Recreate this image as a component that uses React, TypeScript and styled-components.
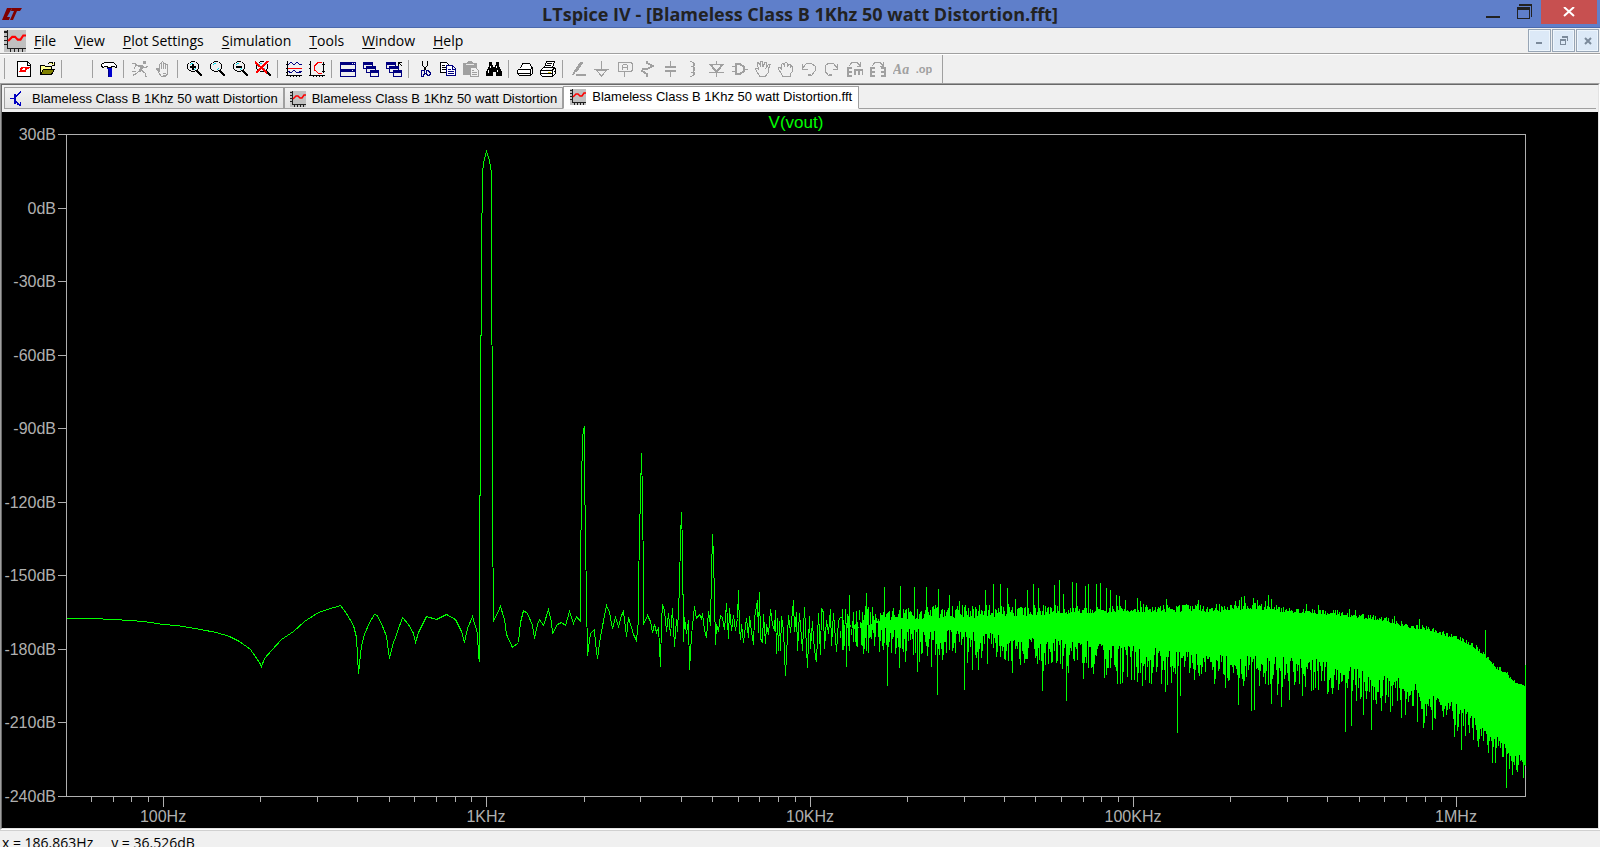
import styled, { createGlobalStyle } from "styled-components";
import { FC, ReactNode } from "react";

const INK = "#000";
const NAVY = "#000080";
const RED = "#f00";
const GRAY = "#a0a0a0";

const PLOT = { left: 66, right: 1525, top: 134, bottom: 796 };
const DECADE = 323;
const X_100HZ = 163;

const Y_LABELS = [30, 0, -30, -60, -90, -120, -150, -180, -210, -240];
const X_LABELS = ["100Hz", "1KHz", "10KHz", "100KHz", "1MHz"];

// Low frequency part of the spectrum, where the single bins are visible
const TRACE =
  "66,618 92,618 113,619 129,620 143,621 163,624 176,625 200,629 216,632 229,636 239,641 250,649 259,662 261,666 264,658 271,650 281,639 293,631 304,621 318,612 327,609 340,605 346,613 353,625 356,637 358,673 361,645 364,634 369,622 374,614 377,615 383,628 386,636 389,658 392,645 396,634 402,617 408,624 413,633 415,642 418,632 426,616 436,619 446,614 455,619 461,631 464,642 467,628 472,616 477,633 478,655 479,661 479,580 480,418 481,256 482,172 483,164 484,158 486,151 488,157 489,160 490,167 491,172 491,287 492,400 492,510 493,621 500,606 504,619 506,634 512,647 518,642 520,622 523,610 527,613 532,625 534,638 537,624 539,619 543,625 548,609 551,621 552,633 557,624 561,622 565,625 569,611 573,623 576,616 580,621 580,576 581,486 582,437 583,430 584,426 584,465 585,541 587,655 590,633 594,629 595,643 597,658 600,636 606,605 609,612 612,628 615,617 618,626 621,615 623,611 626,636 628,617 633,634 636,640 638,620 638,588 639,534 641,453 642,496 643,582 643,624 647,615 650,621 652,632 654,624 656,632 658,627 660,666 661,622 662,604 664,610 666,631 668,613 670,635 672,608 674,646 676,619 677,631 679,587 680,537 681,512 682,545 683,641 684,617 686,633 688,620 689,669 691,635 694,606 696,618 699,614 701,618 702,613 704,630 706,637 708,611 710,625 711,574 712,534 713,556 714,598 715,644 716,624 718,631 720,615 722,617 724,629 726,603 728,638 729,608 731,630 733,615 735,630 737,618 738,590 739,628 740,639 741,624 743,642 746,618 748,637 749,616 751,631 753,644 754,617 757,600 758,632 759,592 760,638 762,642 763,614 765,643 766,624 768,634 770,609 772,624 774,630 775,610 776,653 777,618 778,650 779,621 780,650 781,616 783,630 785,675 786,655 788,615 790,632 793,600 794,631 796,612 797,650 799,613 802,650 804,607 807,667 809,616 810,648 812,621 813,639 815,657 816,661 818,613 820,654 821,608 823,612 824,648 826,620 828,633 830,609 831,645 833,613 836,651 838,620 840,617";

// [x, y, depth of the random part]
const TOP: number[][] = [
  [836, 632, 24], [860, 627, 22], [880, 620, 15], [900, 619, 14], [960, 617, 14], [1020, 616, 13], [1060, 613, 9], [1100, 612, 7],
  [1150, 611, 8], [1230, 611, 8], [1260, 609, 8], [1290, 612, 5], [1330, 614, 6], [1350, 617, 5],
  [1380, 620, 6], [1410, 628, 5], [1430, 630, 5], [1450, 637, 4], [1470, 645, 6], [1480, 652, 5], [1485, 657, 4],
  [1495, 667, 4], [1505, 673, 4], [1515, 682, 2], [1525, 686, 1],
];
const BOTTOM: number[][] = [
  [836, 614, 38], [860, 619, 32], [900, 626, 30], [950, 629, 27], [1000, 633, 27], [1050, 637, 28], [1100, 641, 28],
  [1130, 644, 28], [1160, 647, 26], [1200, 653, 20], [1230, 654, 32], [1260, 655, 34], [1300, 656, 34],
  [1340, 662, 34], [1375, 674, 34], [1400, 674, 34], [1420, 684, 30], [1440, 695, 24], [1460, 704, 28],
  [1480, 723, 22], [1490, 729, 26], [1505, 743, 24], [1525, 752, 26],
];
const PEAKS: number[][] = [
  [849, 594], [866, 592], [884, 586], [900, 585], [914, 586], [926, 586], [938, 588], [949, 594], [959, 600], [985, 589],
  [993, 583], [1000, 583], [1007, 587], [1015, 598], [1027, 589], [1033, 583], [1038, 587], [1054, 584],
  [1059, 579], [1063, 593], [1072, 581], [1076, 582], [1085, 585], [1088, 583], [1096, 583], [1100, 582],
  [1106, 587], [1110, 589], [1116, 594], [1119, 595], [1125, 599], [1137, 597], [1140, 600], [1166, 598],
  [1198, 599], [1235, 600], [1239, 599], [1241, 596], [1244, 595], [1253, 597], [1257, 599], [1265, 600],
  [1268, 594], [1271, 598], [1306, 603], [1318, 604], [1349, 608], [1355, 609], [1394, 615], [1419, 618],
  [1485, 629], [1525, 664],
];
const NOTCHES: number[][] = [
  [846, 666], [863, 653], [887, 685], [899, 667], [905, 661], [917, 671], [919, 661], [931, 666], [937, 694], [942, 659],
  [964, 689], [967, 662], [972, 669], [978, 669], [987, 663], [1012, 672], [1020, 664], [1037, 663],
  [1042, 690], [1043, 670], [1051, 662], [1056, 662], [1062, 668], [1066, 700], [1068, 672], [1083, 678],
  [1093, 673], [1104, 677], [1106, 674], [1117, 683], [1120, 683], [1122, 682], [1127, 676], [1131, 679],
  [1134, 679], [1137, 681], [1142, 685], [1145, 679], [1149, 682], [1151, 683], [1161, 683], [1165, 691],
  [1167, 684], [1171, 682], [1177, 732], [1180, 695], [1194, 679], [1199, 675], [1214, 683], [1225, 687],
  [1229, 679], [1238, 704], [1244, 680], [1251, 710], [1254, 709], [1271, 703], [1277, 694], [1281, 706],
  [1289, 699], [1302, 695], [1313, 689], [1328, 691], [1345, 731], [1351, 725], [1356, 700], [1363, 714],
  [1371, 729], [1381, 710], [1390, 711], [1401, 717], [1405, 714], [1417, 721], [1423, 727], [1424, 722],
  [1432, 729], [1443, 716], [1454, 736], [1461, 749], [1478, 746], [1492, 762], [1495, 762], [1506, 787],
  [1509, 768], [1512, 774], [1516, 769], [1523, 777], [1525, 765],
];

const envelope = (points: number[][], x: number) => {
  const i = Math.max(1, points.findIndex((p) => p[0] >= x));
  const [a, b] = [points[i - 1], points[i]];
  const t = (x - a[0]) / (b[0] - a[0]);
  return [a[1] + (b[1] - a[1]) * t, a[2] + (b[2] - a[2]) * t];
};

const buildNoise = () => {
  let seed = 7919;
  const random = () => {
    seed = (seed * 16807) % 2147483647;
    return seed / 2147483647;
  };
  const peaks = new Map(PEAKS.map(([x, y]) => [x, y]));
  const notches = new Map(NOTCHES.map(([x, y]) => [x, y]));
  let path = "";
  for (let x = 840; x <= PLOT.right; x++) {
    const [topBase, topDepth] = envelope(TOP, x);
    const [bottomBase, bottomDepth] = envelope(BOTTOM, x);
    const top = peaks.get(x) ?? Math.round(topBase - topDepth * random() ** 1.2);
    const bottom = notches.get(x) ?? Math.round(bottomBase + bottomDepth * random() ** 1.2);
    path += `M${x} ${top}V${bottom}`;
  }
  return path;
};

const NOISE = buildNoise();

const buildTicks = () => {
  let path = "";
  Y_LABELS.forEach((_, i) => {
    path += `M57 ${Math.round(PLOT.top + (i * 662) / 9)}H66`;
  });
  for (let decade = -1; decade < 5; decade++) {
    for (let n = 1; n < 10; n++) {
      const x = Math.round(X_100HZ + DECADE * (decade + Math.log10(n)) + decade * 0.3);
      if (x < PLOT.left || x > PLOT.right) continue;
      path += `M${x} ${PLOT.bottom}v${n === 1 ? 10 : 5}`;
    }
  }
  return path;
};

const TICKS = buildTicks();

const Line: FC<{ d: string; color?: string; fill?: string; width?: number }> = ({
  d,
  color = INK,
  fill = "none",
  width = 1,
}) => <path d={d} stroke={color} fill={fill} strokeWidth={width} />;

const LtLogo: FC = () => (
  <svg width="20" height="14" viewBox="0 0 20 14" aria-hidden="true">
    <path d="M5 1h5L5 10h3l-1 3H0zM10 1h10l-2 3h-3l-4 9H8l4-9H9z" fill="#800000" />
  </svg>
);

const WaveIcon: FC<{ size: number }> = ({ size }) => (
  <svg width={size} height={size} viewBox="0 0 16 16" aria-hidden="true">
    <rect width="16" height="16" fill="#c0c0c0" />
    <path
      d="M2.5 0v14M0 1.5h2M0 4.5h2M0 7.5h2M0 10.5h2M2 13.5h14M4.5 14v2M7.5 14v2M10.5 14v2M13.5 14v2"
      stroke="#202020"
      fill="none"
      shapeRendering="crispEdges"
    />
    <path d="M3 8l2-2 1-1h2l2 2h2l2-3h2" stroke={RED} strokeWidth="1.5" fill="none" />
  </svg>
);

const SchematicIcon: FC = () => (
  <svg width="16" height="16" viewBox="0 0 16 16" shapeRendering="crispEdges" aria-hidden="true">
    <path d="M4 3h2v10H4z" fill="#0000c0" />
    <Line color="#0000c0" d="M0 7.5h5M6 5.500l5-5M6 10.500l4 4M7 13.500h4M10.500 11v4" />
  </svg>
);

const Lens: FC<{ children?: ReactNode }> = ({ children }) => (
  <g transform="translate(1 0)">
    <Line d="M4 .5h4M2.500 1.500h1M8.500 1.500h1M1.500 2v1M10.500 2v1M.5 3v5M11.500 3v5M1.500 8v1M10.500 8v1M2 9.500h2M8 9.500h2M4 10.500h4" />
    <Line color="#00d8e8" d="M3 3.500h1M4 2.500h2M8.500 7v1M7 8.500h1" />
    <Line width={2} d="M10 10l5 5" />
    {children}
  </g>
);

const Windows: FC = () => (
  <>
    <path d="M0 1h10v7H0zM3 5h10v7H3zM7 9h9v7H7z" fill={NAVY} />
    <path d="M1 4h8v1H1zM1 5h2v2H1zM4 8h8v1H4zM4 9h3v2H4zM8 12h7v3H8z" fill="#f0f0f0" />
  </>
);

type Tool = { label: string; icon?: ReactNode; disabled?: boolean };

const GROUPS: Tool[][] = [
  [
    {
      label: "New Schematic",
      icon: (
        <>
          <Line fill="#fff" d="M1.500 .5h10l3 3v12h-13zM11.500 1v3h3" />
          <path d="M5 6h3l-2 3h2l-1 2H3zM8 6h6l-1 2h-2l-1 3H7l2-3z" fill={RED} />
        </>
      ),
    },
    {
      label: "Open",
      icon: (
        <>
          <Line fill="#ffff90" d="M1.500 13.500v-9h4l1 1h6v3M9 2.500l2-1h2l1 1M15.500 1v3h-3" />
          <Line fill="#808000" d="M1.500 13.500l3-5h11l-3 5z" />
        </>
      ),
    },
  ],
  [{ label: "Save" }],
  [
    {
      label: "Control Panel",
      icon: (
        <>
          <Line fill="#fff" d="M.5 5.500v-2l3-2h9l3 3v2l-3-1h-2v1h-4v-1h-3l-1 1z" />
          <path d="M6 7h5v9H7v-7z" fill="#0000d0" />
          <path d="M7 8h1v8H7z" fill={NAVY} />
        </>
      ),
    },
  ],
  [
    {
      label: "Run",
      disabled: true,
      icon: (
        <>
          <path d="M11 0h3v3h-3zM7 4h4l1 2-3 5H7l1-5H6z" fill={GRAY} />
          <Line color={GRAY} d="M9 9l4 3v3h2M7 10l-3 3H1M11 6l2 1 3-2M7 4.500H4L2 8M0 2.500h3l2 2M0 10.500h4M1 15l3-3" />
        </>
      ),
    },
    {
      label: "Halt",
      disabled: true,
      icon: (
        <Line
          color={GRAY}
          d="M4.500 11l-3-3v-1h1l2 2V3.500l1-1 1 1V8M6.500 3V1.500l1-1 1 1V8M8.500 2h2V8M10.500 3.500h2V13l-2 2.500h-4l-3-4M7.500 12h3M8 14h4"
        />
      ),
    },
  ],
  [
    { label: "Zoom in", icon: <Lens><Line width={2} d="M3 6h6M6 3v6" /></Lens> },
    { label: "Pan", icon: <Lens /> },
    { label: "Zoom out", icon: <Lens><Line width={2} d="M3 6h6" /></Lens> },
    { label: "Zoom full extents", icon: <Lens><Line color={RED} width={2} d="M-1 1l12 11M12 0L0 12" /></Lens> },
  ],
  [
    {
      label: "Autorange",
      icon: (
        <>
          <Line d="M1.500 0v15M0 14.500h16M4.500 15v1M7.500 15v1M10.500 15v1M13.500 15v1M0 3.500h1M0 7.500h1M0 11.500h1" />
          <Line color={NAVY} d="M2 4l3-3 3 3 3-3 3 3 2-1M2 10.500l3 1 3-2 3 2 5-1M10 11.500h5" />
          <Line color={RED} d="M2 8l3-1 3 1 3-1h5" />
        </>
      ),
    },
    {
      label: "Plot limits",
      icon: (
        <>
          <Line d="M1.500 0v15M0 14.500h16M4.500 15v1M7.500 15v1M10.500 15v1M13.500 15v1M0 3.500h1M0 7.500h1M14.500 1v11M12.500 3.500h4M12.500 10.500h4M5.500 5v5" />
          <Line color={RED} d="M13 1.500H9l-4 4v3l4 3.500h4" />
        </>
      ),
    },
  ],
  [
    {
      label: "Tile windows",
      icon: (
        <>
          <path d="M0 1h16v15H0z" fill={NAVY} />
          <path d="M1 4h14v4H1zM1 11h14v4H1z" fill="#f0f0f0" />
          <path d="M12 2h1v1h-1zM14 2h1v1h-1zM12 9h1v1h-1z" fill="#f0f0f0" />
        </>
      ),
    },
    { label: "Cascade windows", icon: <Windows /> },
    { label: "Close all windows", icon: <><Windows /><Line d="M12 1.500h4M12.500 1v4M13 2l3 3" /></> },
  ],
  [
    {
      label: "Cut",
      icon: (
        <>
          <Line d="M5.500 0v4l4 6M10.500 0v4l-4 6" />
          <Line color={NAVY} d="M5 9.500h2v4l-1 2h-1l-1-1v-3zM10 9.500h1l2 2v2l-1 1h-1l-2-2z" />
        </>
      ),
    },
    {
      label: "Copy",
      icon: (
        <>
          <Line fill="#fff" d="M.5 1.500h6l3 3v7h-9zM2 4.500h3M2 6.500h5M2 8.500h5" />
          <Line color={NAVY} fill="#fff" d="M6.500 4.500h6l3 3v7h-9zM12.500 5v3h3M8 8.500h3M8 10.500h6M8 12.500h6" />
        </>
      ),
    },
    {
      label: "Paste",
      disabled: true,
      icon: (
        <>
          <path d="M0 2h4l1-2h4l1 2h4v12H0z" fill={GRAY} />
          <Line color="#e8e8e8" d="M3 3.500h8" />
          <Line color={GRAY} fill="#f0f0f0" d="M7.500 6.500h5l3 3v6h-8zM9 9.500h2M9 11.500h5M9 13.500h5" />
        </>
      ),
    },
    {
      label: "Find",
      icon: (
        <>
          <path d="M3 1h3v3h1v2h2V4h1V1h3v4l3 6v4h-6v-4H7v4H0v-4l3-6z" fill={INK} />
          <Line color="#fff" d="M4.500 5v2M2.500 9v3M10.500 5v2M11.500 9v2" />
        </>
      ),
    },
  ],
  [
    {
      label: "Print Setup",
      icon: (
        <Line fill="#fff" d="M3.500 7.500l2-5h7l2 3v2M1.500 8.500h12l2-2v6l-2 2h-11l-2-2v-3zM1 12.500h12M2 14.500h12M13.500 9v5" />
      ),
    },
    {
      label: "Print",
      icon: (
        <>
          <Line fill="#fff" d="M4.500 6.500l2-6h8l-2 6M7 2.500h5M6 4.500h5M.5 9.500l3-3h11l1 1v5l-3 3h-10l-2-2zM1 9.500h11l3-3M1 12.500h12M12.500 10v5M14 10.500h2" />
          <Line color="#d8c800" d="M8 11.500h3" />
        </>
      ),
    },
  ],
  [
    {
      label: "Draw Wire",
      disabled: true,
      icon: (
        <>
          <Line color={GRAY} width={3} d="M11 1L4 11" />
          <Line color={GRAY} width={2} d="M2 14l2-4M5 14h10" />
        </>
      ),
    },
    { label: "Ground", disabled: true, icon: <Line color={GRAY} d="M7.500 0v8M0 8.500h15M2 9l5.500 6L13 9M3 9.500h9" /> },
    {
      label: "Label Net",
      disabled: true,
      icon: <Line color={GRAY} d="M2 1.500h12l1 1v7l-1 1H2l-1-1v-7zM7.500 11v5M5.500 9V5l1-1.500h3l1 1.500v4M6 6.500h4" />,
    },
    { label: "Resistor", disabled: true, icon: <Line color={GRAY} width={2} d="M7 0v2l6 3-6 3H3l-1 2 5 3v3" /> },
    { label: "Capacitor", disabled: true, icon: <><Line color={GRAY} d="M7.500 0v6M7.500 10v6" /><Line color={GRAY} width={2} d="M2 6h11M2 10h11" /></> },
    {
      label: "Inductor",
      disabled: true,
      icon: (
        <path
          d="M4 0h2v1h2v1h1v3H8v1h1v4H8v1h1v3H8v1H6v1H4v-1h2v-1h1v-2H5v-1h2V6H5V5h2V2H6V1H4z"
          fill={GRAY}
        />
      ),
    },
    {
      label: "Diode",
      disabled: true,
      icon: <><Line color={GRAY} d="M7.500 0v3M0 3.500h15M7.500 12v4M0 11.500h15" /><Line color={GRAY} width={2} d="M2 4l5.500 7L13 4" /></>,
    },
    {
      label: "Component",
      disabled: true,
      icon: <><Line color={GRAY} d="M0 5.500h4M0 10.500h4M13 8h3" /><Line color={GRAY} width={2} d="M4 3h4l4 3v4l-4 3H4z" /></>,
    },
    {
      label: "Move",
      disabled: true,
      icon: (
        <Line color={GRAY} d="M5 15.500L1.500 10 .5 7.500h2l1 1L2.500 3V1.500h1L6 6 5.500 1V.5h2L8 6l2-5h1.500L11 7l3-4h1.500L13 9v3l-3 3.500z" />
      ),
    },
    {
      label: "Drag",
      disabled: true,
      icon: (
        <Line color={GRAY} d="M5 15.500L2.500 11 .5 8.500v-2h2l1 2V4l1-1.500h1L6.500 6V2.500l1-1h1l1 1V6l1-3h1l1 1v2l1-1 1 1v4l-2 3v2.500z" />
      ),
    },
    { label: "Undo", disabled: true, icon: <Line color={GRAY} d="M1.500 3v5h5M2 7l3-4 3-1h2l4 3v5l-3 4H7M7 13.500h3M2 5.500h2" /> },
    { label: "Redo", disabled: true, icon: <Line color={GRAY} d="M13.500 3v5h-5M13 7l-3-4-3-1H5L1 5v5l3 4h4M5 13.500h3M11 5.500h2" /> },
    {
      label: "Rotate",
      disabled: true,
      icon: <><Line color={GRAY} d="M2 5l3-3.500h5l3 3M13.500 1v4h-4" /><Line color={GRAY} width={2} d="M5 7H1v8h4M1 11h4M8 14V9h8v5M12 9v5" /></>,
    },
    {
      label: "Mirror",
      disabled: true,
      icon: <><Line color={GRAY} d="M2 5l3-3.500h5l3 3M13.500 1v4h-4" /><Line color={GRAY} width={2} d="M5 7H1v8h4M1 11h4M11 7h4v8h-4M11 11h4" /></>,
    },
    { label: "Text", disabled: true, icon: <TextGlyph italic>Aa</TextGlyph> },
    { label: "SPICE Directive", disabled: true, icon: <TextGlyph>.op</TextGlyph> },
  ],
];

function TextGlyph({ children, italic }: { children: string; italic?: boolean }) {
  return (
    <text
      x="8"
      y={italic ? 13 : 12}
      textAnchor="middle"
      fill={GRAY}
      fontFamily={italic ? "Liberation Serif, serif" : "Liberation Sans, sans-serif"}
      fontStyle={italic ? "italic" : "normal"}
      fontWeight="bold"
      fontSize={italic ? 14 : 11}
    >
      {children}
    </text>
  );
}

const MENUS = ["File", "View", "Plot Settings", "Simulation", "Tools", "Window", "Help"];

const App: FC = () => {
  return (
    <WindowStyle>
      <GlobalStyle />
      <TitleBarStyle>
        <LogoStyle>
          <LtLogo />
        </LogoStyle>
        <TitleStyle>LTspice IV - [Blameless Class B 1Khz 50 watt Distortion.fft]</TitleStyle>
        <WindowButtonsStyle>
          <WindowButton aria-label="Minimize">
            <svg width="16" height="18" shapeRendering="crispEdges">
              <path d="M1 13h14v2H1z" fill="#222" />
            </svg>
          </WindowButton>
          <WindowButton aria-label="Restore">
            <svg width="16" height="18" shapeRendering="crispEdges">
              <path d="M2 1h13v13h-1V3H2zM0 4h13v12H0zM1 7v8h11V7z" fill="#222" fillRule="evenodd" />
            </svg>
          </WindowButton>
          <WindowButton aria-label="Close" $close>
            <svg width="12" height="10">
              <path d="M1 0l10 9M11 0L1 9" stroke="#fff" strokeWidth="2" />
            </svg>
          </WindowButton>
        </WindowButtonsStyle>
      </TitleBarStyle>

      <MenuBarStyle>
        <WaveIcon size={22} />
        <MenuListStyle>
          {MENUS.map((menu) => (
            <MenuButton key={menu}>
              <u>{menu[0]}</u>
              {menu.slice(1)}
            </MenuButton>
          ))}
        </MenuListStyle>
        <MdiButtonsStyle>
          <MdiButton aria-label="Minimize document">
            <svg width="9" height="9" shapeRendering="crispEdges">
              <path d="M1 6h6v2H1z" fill="#7b8a9b" />
            </svg>
          </MdiButton>
          <MdiButton aria-label="Restore document">
            <svg width="9" height="9" shapeRendering="crispEdges">
              <path d="M3 0h6v5H8V2H3zM1 3h6v6H1zM2 5v3h4V5z" fill="#7b8a9b" fillRule="evenodd" />
            </svg>
          </MdiButton>
          <MdiButton aria-label="Close document">
            <svg width="9" height="9">
              <path d="M2 2l6 6M8 2L2 8" stroke="#7b8a9b" strokeWidth="2" />
            </svg>
          </MdiButton>
        </MdiButtonsStyle>
      </MenuBarStyle>

      <ToolBarStyle>
        {GROUPS.map((group, i) => (
          <ToolGroupStyle key={i}>
            {group.map(({ label, icon, disabled }) => (
              <ToolButton key={label} aria-label={label} disabled={disabled}>
                <svg width="16" height="16" viewBox="0 0 16 16" shapeRendering="crispEdges">
                  {icon}
                </svg>
              </ToolButton>
            ))}
          </ToolGroupStyle>
        ))}
      </ToolBarStyle>

      <DocumentStyle>
        <DocumentInnerStyle>
          <TabsStyle>
            <TabButton>
              <SchematicIcon />
              Blameless Class B 1Khz 50 watt Distortion
            </TabButton>
            <TabButton>
              <WaveIcon size={16} />
              Blameless Class B 1Khz 50 watt Distortion
            </TabButton>
            <TabButton $active>
              <WaveIcon size={16} />
              Blameless Class B 1Khz 50 watt Distortion.fft
            </TabButton>
            <TabsFillStyle />
          </TabsStyle>
          <PlotSvg viewBox="2 112 1596 716" role="img" aria-label="V(vout)">
            <g transform="translate(.5 .5)" fill="none" shapeRendering="crispEdges">
              <path d={`M66 134H1525V796H66z${TICKS}`} stroke="#b0b0b0" />
              <polyline points={TRACE} stroke="#0f0" />
              <path d={NOISE} stroke="#0f0" />
            </g>
            <TraceName x="796" y="128">
              V(vout)
            </TraceName>
            {Y_LABELS.map((db, i) => (
              <AxisText key={db} x="56" y={Math.round(140 + (i * 662) / 9)} textAnchor="end">
                {db}dB
              </AxisText>
            ))}
            {X_LABELS.map((label, i) => (
              <AxisText key={label} x={Math.round(X_100HZ + i * 323.3)} y="822" textAnchor="middle">
                {label}
              </AxisText>
            ))}
          </PlotSvg>
        </DocumentInnerStyle>
      </DocumentStyle>

      <StatusBarStyle>
        <span>x = 186.863Hz</span>
        <span>y = 36.526dB</span>
      </StatusBarStyle>
    </WindowStyle>
  );
};

const GlobalStyle = createGlobalStyle`
  body {
    margin: 0;
    overflow: hidden;
  }

  button {
    padding: 0;
    border: none;
    background: none;
    color: inherit;
    font: inherit;
  }

  svg {
    flex: none;
  }
`;

const WindowStyle = styled.div`
  display: flex;
  flex-direction: column;
  height: 100vh;
  background-color: #f0f0f0;
  color: #000;
  font-family: "Open Sans", "Segoe UI", sans-serif;
  font-size: 14px;
`;

const TitleBarStyle = styled.header`
  display: grid;
  grid-template-columns: 1fr auto 1fr;
  height: 27px;
  background-color: #5f7fca;
  border-bottom: 1px solid #4b6aae;
`;

const LogoStyle = styled.span`
  padding: 7px 2px;
  line-height: 0;
`;

const TitleStyle = styled.h1`
  margin: 0;
  color: #222;
  font-size: 18px;
  font-weight: 700;
  line-height: 28px;
  white-space: nowrap;
`;

const WindowButtonsStyle = styled.div`
  display: flex;
  justify-content: flex-end;
  align-items: flex-start;
  padding-right: 3px;
`;

const WindowButton = styled.button<{ $close?: boolean }>`
  display: flex;
  align-items: center;
  justify-content: center;
  width: ${({ $close }) => ($close ? 56 : 32)}px;
  height: 24px;
  background-color: ${({ $close }) => ($close ? "#c75050" : "transparent")};
`;

const MenuBarStyle = styled.nav`
  display: flex;
  align-items: center;
  height: 25px;
  padding: 0 1px 0 4px;
  border-bottom: 1px solid #a0a0a0;
  box-shadow: 0 1px 0 #fff;
`;

const MenuListStyle = styled.div`
  display: flex;
  flex: 1;
  gap: 18px;
  padding-left: 8px;
`;

const MenuButton = styled.button`
  line-height: 24px;
  white-space: nowrap;

  u {
    text-underline-offset: 2px;
  }
`;

const MdiButtonsStyle = styled.div`
  display: flex;
  gap: 1px;
`;

const MdiButton = styled.button`
  display: flex;
  align-items: center;
  justify-content: center;
  width: 23px;
  height: 23px;
  background-color: #dce9f7;
  border: 1px solid #97a5b5;
  box-shadow: inset 0 0 0 1px #edf5fc;
`;

const ToolBarStyle = styled.div`
  display: flex;
  align-self: flex-start;
  box-sizing: border-box;
  height: 28px;
  margin-top: 1px;
  padding: 0 7px 0 12px;
  border-right: 1px solid #a0a0a0;
  background: linear-gradient(#a0a0a0, #a0a0a0) 4px 3px / 1px 21px no-repeat;
`;

const ToolGroupStyle = styled.div`
  display: flex;
  align-items: center;

  & + &::before {
    content: "";
    width: 1px;
    height: 18px;
    margin: 0 4px 0 3px;
    background-color: #a0a0a0;
  }
`;

const ToolButton = styled.button`
  padding: 0 3px 0 4px;
  line-height: 0;
`;

const DocumentStyle = styled.main`
  display: flex;
  flex: 1;
  min-height: 0;
  border: 1px solid;
  border-color: #a0a0a0 #fff #fff #a0a0a0;
`;

const DocumentInnerStyle = styled.div`
  display: flex;
  flex: 1;
  flex-direction: column;
  min-width: 0;
  border: 1px solid;
  border-color: #696969 #e3e3e3 #e3e3e3 #696969;
`;

const TabsStyle = styled.div`
  display: flex;
  align-items: flex-end;
  box-sizing: border-box;
  height: 27px;
  padding: 1px 2px 3px;
`;

const TabButton = styled.button<{ $active?: boolean }>`
  display: flex;
  align-items: flex-start;
  gap: 6px;
  box-sizing: border-box;
  height: ${({ $active }) => ($active ? 23 : 22)}px;
  padding: ${({ $active }) => ($active ? "2px 6px 0" : "3px 5px 0")};
  border: 1px solid #a0a0a0;
  border-bottom-color: ${({ $active }) => ($active ? "#fff" : "#a0a0a0")};
  background: ${({ $active }) => ($active ? "#fff" : "linear-gradient(#f2f2f2, #e4e4e4)")};
  font-family: "Liberation Sans", Arial, sans-serif;
  font-size: 13px;
  line-height: 16px;
  white-space: nowrap;
`;

const TabsFillStyle = styled.div`
  flex: 1;
  border-bottom: 1px solid #a0a0a0;
`;

const PlotSvg = styled.svg`
  flex: 1;
  width: 100%;
  min-height: 0;
  background-color: #000;
`;

const AxisText = styled.text`
  fill: #b0b0b0;
  font-family: "Liberation Sans", Arial, sans-serif;
  font-size: 16px;
`;

const TraceName = styled(AxisText)`
  fill: #0f0;
  font-size: 17px;
  text-anchor: middle;
`;

const StatusBarStyle = styled.footer`
  display: flex;
  gap: 18px;
  box-sizing: border-box;
  height: 17px;
  padding: 2px 2px 0;
  border-top: 1px solid #d0d0d0;
  overflow: hidden;
  line-height: 19px;
  white-space: nowrap;
`;

export default App;
